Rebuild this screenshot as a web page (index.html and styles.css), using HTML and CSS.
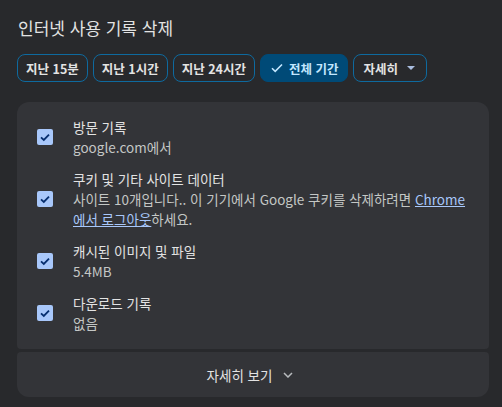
FILE: index.html
```html
<!DOCTYPE html>
<html lang="ko">
<head>
<meta charset="utf-8">
<link rel="stylesheet" href="styles.css">
</head>
<body>
<div class="dialog">
  <h1 class="title">인터넷 사용 기록 삭제</h1>
  <div class="chips">
    <button class="chip">지난 15분</button>
    <button class="chip">지난 1시간</button>
    <button class="chip">지난 24시간</button>
    <button class="chip selected"><svg class="chip-check" viewBox="0 0 12 10" width="12" height="10"><path d="M1 5.2 L4.2 8.3 L11 1.5" fill="none" stroke="currentColor" stroke-width="1.6"/></svg>전체 기간</button>
    <button class="chip more">자세히<span class="tri"></span></button>
  </div>
  <div class="card list">
    <div class="item">
      <span class="cb"><svg viewBox="0 0 16 16" width="16" height="16"><path d="M4 8.3 L6.8 10.9 L12 5.6" fill="none" stroke="#062e6f" stroke-width="1.8"/></svg></span>
      <div class="text">
        <div class="label">방문 기록</div>
        <div class="sub">google.com에서</div>
      </div>
    </div>
    <div class="item">
      <span class="cb"><svg viewBox="0 0 16 16" width="16" height="16"><path d="M4 8.3 L6.8 10.9 L12 5.6" fill="none" stroke="#062e6f" stroke-width="1.8"/></svg></span>
      <div class="text">
        <div class="label">쿠키 및 기타 사이트 데이터</div>
        <div class="sub nowrap">사이트 10개입니다.. 이 기기에서 Google 쿠키를 삭제하려면 <a class="link" href="#">Chrome<br>에서 로그아웃</a>하세요.</div>
      </div>
    </div>
    <div class="item">
      <span class="cb"><svg viewBox="0 0 16 16" width="16" height="16"><path d="M4 8.3 L6.8 10.9 L12 5.6" fill="none" stroke="#062e6f" stroke-width="1.8"/></svg></span>
      <div class="text">
        <div class="label">캐시된 이미지 및 파일</div>
        <div class="sub">5.4MB</div>
      </div>
    </div>
    <div class="item">
      <span class="cb"><svg viewBox="0 0 16 16" width="16" height="16"><path d="M4 8.3 L6.8 10.9 L12 5.6" fill="none" stroke="#062e6f" stroke-width="1.8"/></svg></span>
      <div class="text">
        <div class="label">다운로드 기록</div>
        <div class="sub">없음</div>
      </div>
    </div>
  </div>
  <div class="card expand">
    <span class="expand-text">자세히 보기</span>
    <svg class="chev" viewBox="0 0 10 6" width="10" height="6"><path d="M1 1 L5 5 L9 1" fill="none" stroke="#b8bbbe" stroke-width="1.5"/></svg>
  </div>
</div>
</body>
</html>
```

FILE: styles.css
```css
html, body {
  margin: 0;
  padding: 0;
  background: #28292c;
}
body {
  font-family: "Noto Sans CJK KR", "Noto Sans", sans-serif;
  color: #e3e3e3;
}
.dialog {
  padding: 16px 13px 10px 17px;
  width: 502px;
  height: 407px;
  box-sizing: border-box;
  overflow: hidden;
}
.title {
  margin: 0 0 0 1px;
  font-size: 17px;
  line-height: 24px;
  font-weight: 400;
  color: #e3e3e3;
}
.chips {
  display: flex;
  gap: 5px;
  margin-top: 14px;
}
.chip {
  height: 28px;
  box-sizing: border-box;
  border: 1px solid #0e6a9f;
  border-radius: 8px;
  background: transparent;
  color: #e3e3e3;
  font-family: "Noto Sans CJK KR", "Noto Sans", sans-serif;
  font-size: 12.5px;
  font-weight: 600;
  padding: 0 8px;
  display: flex;
  align-items: center;
}
.chip.selected {
  background: #004a77;
  border-color: #004a77;
  color: #c2e7ff;
  padding: 0 9px 0 10px;
}
.chip-check {
  margin-right: 6px;
}
.chip.more {
  padding: 0 11px 0 9px;
}
.tri {
  width: 0;
  height: 0;
  border-left: 4px solid transparent;
  border-right: 4px solid transparent;
  border-top: 4px solid #a9bde0;
  margin-left: 9px;
}
.card {
  background: #333438;
}
.list {
  margin-top: 20px;
  border-radius: 12px 12px 4px 4px;
  padding: 15px 20px 16px 20px;
  display: flex;
  flex-direction: column;
  gap: 12px;
}
.item {
  display: flex;
  align-items: center;
  gap: 20px;
}
.cb {
  width: 16px;
  height: 16px;
  border-radius: 2px;
  background: #a8c7fa;
  flex: none;
  display: flex;
}
.text {
  font-size: 13.5px;
  line-height: 20px;
}
.label {
  color: #e3e3e3;
}
.sub {
  color: #c4c7c5;
}
.nowrap {
  white-space: nowrap;
}
.link {
  color: #a8c7fa;
  text-decoration: underline;
}
.expand {
  margin-top: 3px;
  height: 45px;
  border-radius: 4px 4px 12px 12px;
  display: flex;
  align-items: center;
  justify-content: center;
  gap: 11px;
  font-size: 13.5px;
  padding-right: 6px;
}
.chev {
  margin-top: 1px;
}
```
